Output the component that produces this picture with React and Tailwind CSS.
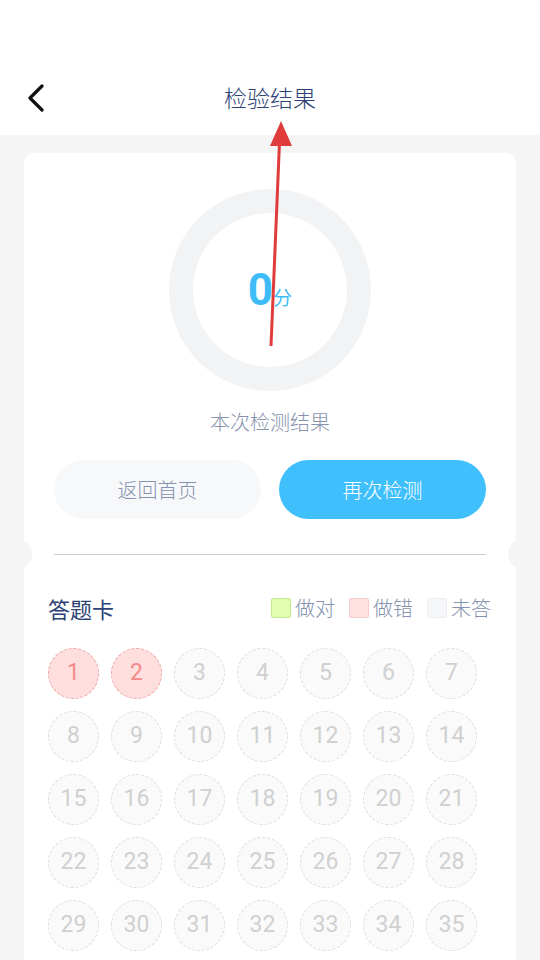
const cjk = { fontFamily: '"Noto Sans CJK SC", "Noto Sans", sans-serif' };
const num = { fontFamily: 'Roboto, "Noto Sans", sans-serif' };

const wrong = [1, 2];
const questions = Array.from({ length: 35 }, (_, i) => i + 1);

function Legend({ box, label }) {
  return (
    <div className="flex items-center gap-[4px]">
      <span className={`w-[20px] h-[20px] rounded-[2px] border ${box}`} />
      <span className="text-[20px] font-light leading-[28px] text-[#8592ad]">{label}</span>
    </div>
  );
}

export default function App() {
  return (
    <div className="relative h-[960px] w-[540px] overflow-hidden bg-[#f5f5f5]" style={cjk}>
      {/* header */}
      <div className="h-[135px] bg-white pt-[60px]">
        <div className="relative flex h-[75px] items-center justify-center">
          <svg className="absolute left-[27px]" width="18" height="28" viewBox="0 0 18 28" fill="none">
            <polyline points="15,2 3,14 15,26" stroke="#111" strokeWidth="3.2" strokeLinecap="round" strokeLinejoin="round" />
          </svg>
          <h1 className="text-[23px] font-light text-[#2c4274]">检验结果</h1>
        </div>
      </div>

      {/* card */}
      <div className="relative mx-[24px] mt-[18px] h-[900px] rounded-[10px] bg-white">
        <div className="flex flex-col items-center pt-[36px]">
          <div className="flex h-[202px] w-[202px] items-center justify-center rounded-full border-[24px] border-[#f2f3f5]">
            <div className="flex items-baseline text-[#3ebcf8]">
              <span className="text-[44px] font-bold leading-none" style={num}>0</span>
              <span className="text-[19px] leading-none">分</span>
            </div>
          </div>
          <p className="mt-[20px] text-[20px] font-light leading-[22px] text-[#8592ad]">本次检测结果</p>
        </div>

        <div className="mt-[27px] flex gap-[18px] px-[30px]">
          <button type="button" className="h-[59px] flex-1 rounded-full bg-[#f7f8fa] text-[20px] font-light text-[#8592ad]">
            返回首页
          </button>
          <button type="button" className="h-[59px] flex-1 rounded-full bg-[#40bffd] text-[20px] font-light text-white">
            再次检测
          </button>
        </div>

        <div className="mx-[30px] mt-[35px] h-px bg-[#cccccc]" />
        <span className="absolute left-[-24px] top-[385px] h-[32px] w-[32px] rounded-full bg-[#f5f5f5]" />
        <span className="absolute right-[-24px] top-[385px] h-[32px] w-[32px] rounded-full bg-[#f5f5f5]" />

        <div className="mt-[39px] flex items-center justify-between pl-[24px] pr-[25px]">
          <h2 className="text-[22px] leading-[28px] text-[#2c4274]">答题卡</h2>
          <div className="flex items-center gap-[14px]">
            <Legend box="bg-[#e0fdb0] border-[#c6ea8c]" label="做对" />
            <Legend box="bg-[#ffe1e1] border-[#f9cccc]" label="做错" />
            <Legend box="bg-[#f6f7f9] border-[#eceef1]" label="未答" />
          </div>
        </div>

        <div className="mt-[26px] grid grid-cols-[repeat(7,51px)] gap-[12px] pl-[24px]">
          {questions.map((q) => {
            const bad = wrong.includes(q);
            return (
              <div
                key={q}
                className={`flex h-[51px] w-[51px] items-center justify-center rounded-full border border-dashed text-[23px] ${
                  bad ? 'border-[#eba3a3] bg-[#ffdede] text-[#f28a8a]' : 'border-[#dcdcdc] bg-[#fafafa] text-[#d0d0d0]'
                }`}
                style={num}
              >
                {q}
              </div>
            );
          })}
        </div>
      </div>

      {/* annotation arrow */}
      <svg className="pointer-events-none absolute inset-0" width="540" height="960" viewBox="0 0 540 960">
        <line x1="271" y1="346" x2="279.5" y2="142" stroke="#e03c3c" strokeWidth="3" />
        <polygon points="281,121 270,146 292,146" fill="#e03c3c" />
      </svg>
    </div>
  );
}
